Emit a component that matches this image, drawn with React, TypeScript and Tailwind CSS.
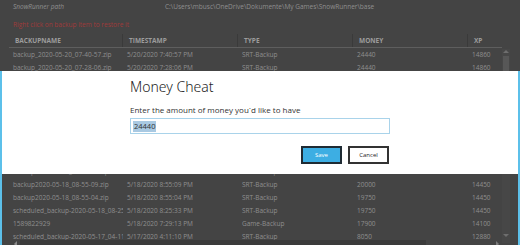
import React from "react";

const cols = [
  { w: "w-[114px]" },
  { w: "w-[115px]" },
  { w: "w-[115px]" },
  { w: "w-[115px]" },
  { w: "w-[34px]" },
];

const rows: string[][] = [
  ["backup_2020-05-20_07-40-57.zip", "5/20/2020 7:40:57 PM", "SRT-Backup", "24440", "14860"],
  ["backup_2020-05-20_07-28-06.zip", "5/20/2020 7:28:06 PM", "SRT-Backup", "24440", "14860"],
  ["backup_2020-05-20_06-55-12.zip", "5/20/2020 6:55:12 PM", "SRT-Backup", "23900", "14860"],
  ["backup_2020-05-19_09-12-41.zip", "5/19/2020 9:12:41 PM", "SRT-Backup", "22100", "14700"],
  ["backup_2020-05-19_08-40-03.zip", "5/19/2020 8:40:03 PM", "SRT-Backup", "21500", "14700"],
  ["backup_2020-05-19_07-58-22.zip", "5/19/2020 7:58:22 PM", "SRT-Backup", "21000", "14620"],
  ["backup_2020-05-19_07-20-10.zip", "5/19/2020 7:20:10 PM", "SRT-Backup", "20600", "14500"],
  ["backup_2020-05-18_09-30-18.zip", "5/18/2020 9:30:18 PM", "SRT-Backup", "20400", "14450"],
  ["backup_2020-05-18_09-10-52.zip", "5/18/2020 9:10:52 PM", "SRT-Backup", "20200", "14450"],
  ["backup2020-05-18_09-01-37.zip", "5/18/2020 9:01:37 PM", "SRT-Backup", "20000", "14450"],
  ["backup2020-05-18_08-55-09.zip", "5/18/2020 8:55:09 PM", "SRT-Backup", "20000", "14450"],
  ["backup2020-05-18_08-55-04.zip", "5/18/2020 8:55:04 PM", "SRT-Backup", "19750", "14450"],
  ["scheduled_backup-2020-05-18_08-25-33.zip", "5/18/2020 8:25:33 PM", "SRT-Backup", "19750", "14450"],
  ["1589822929", "5/18/2020 7:29:13 PM", "Game-Backup", "17900", "14100"],
  ["scheduled_backup-2020-05-17_04-11-10.zip", "5/17/2020 4:11:10 PM", "SRT-Backup", "8050", "12880"],
];

const headers = ["BACKUPNAME", "TIMESTAMP", "TYPE", "MONEY", "XP"];

export default function App() {
  return (
    <div
      className="relative w-[520px] h-[245px] overflow-hidden bg-[#444444] text-[#8f8f8f]"
      style={{ fontFamily: '"Open Sans", "Noto Sans", sans-serif' }}
    >
      {/* top info */}
      <div className="flex h-[13px] items-center pl-[13px] text-[6.5px] italic leading-[8px]">
        <span className="w-[152px]">SnowRunner path</span>
        <span className="not-italic">C:\Users\mbusc\OneDrive\Dokumente\My Games\SnowRunner\base</span>
      </div>
      <div className="flex h-[18px] items-center pl-[13px] pt-[5px] text-[6.5px] leading-[8px] text-[#a03a3a]">
        Right click on backup item to restore it
      </div>

      {/* table */}
      <div className="ml-[9px] mt-[3px] flex w-[502px]">
        <div className="flex w-[493px] flex-col">
          <div className="flex h-[14px] border-b-[1.5px] border-[#5e5e5e] text-[6.5px] font-bold leading-[8px] text-[#9c9c9c]">
            {headers.map((h, i) => (
              <div
                key={h}
                className={`${cols[i].w} flex items-center pl-[6px] pt-[1px] ${i < 4 ? "border-r border-[#3a3a3a]" : ""}`}
              >
                {h}
              </div>
            ))}
          </div>
          <div className="flex flex-col">
            {rows.map((r, ri) => (
              <div key={ri} className="flex h-[13px] items-center text-[6.5px] leading-[8px]">
                {r.map((c, ci) => (
                  <div
                    key={ci}
                    className={`${cols[ci].w} overflow-hidden whitespace-nowrap pl-[4px]`}
                  >
                    {c}
                  </div>
                ))}
              </div>
            ))}
          </div>
        </div>
        {/* vertical scrollbar */}
        <div className="mt-[15px] flex w-[8px] flex-col items-center bg-[#474747]">
          <div className="mt-[1px] h-0 w-0 border-x-[3px] border-b-[3px] border-x-transparent border-b-[#6e6e6e]" />
          <div className="mt-[3px] h-[60px] w-[6px] bg-[#575757]" />
        </div>
      </div>

      {/* horizontal scrollbar */}
      <div className="absolute left-[10px] top-[240px] flex h-[10px] w-[492px] items-start">
        <div className="ml-[4px] mt-[1px] h-0 w-0 border-y-[3px] border-r-[3px] border-y-transparent border-r-[#8a8a8a]" />
        <div className="ml-[3px] h-[8px] w-[406px] bg-[#3b3b3b]" />
        <div className="ml-[70px] mt-[1px] h-0 w-0 border-y-[3px] border-l-[3px] border-y-transparent border-l-[#7a7a7a]" />
      </div>
      <div className="absolute left-[503px] top-[234px] h-0 w-0 border-x-[3px] border-t-[3px] border-x-transparent border-t-[#6e6e6e]" />

      {/* window blue edges */}
      <div className="absolute left-0 top-[71px] h-[174px] w-[2px] bg-[#5cc0ea]" />
      <div className="absolute right-0 top-[71px] h-[174px] w-[2px] bg-[#5cc0ea]" />

      {/* dialog */}
      <div className="absolute left-[2px] top-[71px] h-[103px] w-[516px] bg-white">
        <div className="ml-[128px] w-[260px] pt-[6px]">
          <div
            className="text-[14px] leading-[19px] text-[#1e1e1e]"
            style={{ fontFamily: '"Noto Sans", sans-serif', fontWeight: 300 }}
          >
            Money Cheat
          </div>
          <div className="mt-[9px] text-[8px] leading-[10px] text-[#333]">
            Enter the amount of money you´d like to have
          </div>
          <div className="mt-[3px] flex h-[16px] items-center border border-[#a9d3ea] pl-[2px] text-[7.5px] leading-[11px] text-[#333]">
            <span className="bg-[#a9c9e2] px-[1px]">24440</span>
          </div>
          <div className="mt-[12px] flex justify-end gap-[6px] pr-[1px]">
            <div className="flex h-[18px] w-[41px] items-center justify-center border-2 border-[#1f2b33] bg-[#3daee3] text-[6px] leading-[8px] text-white">
              Save
            </div>
            <div className="flex h-[18px] w-[41px] items-center justify-center border-2 border-[#333] bg-white text-[6px] leading-[8px] text-[#222]">
              Cancel
            </div>
          </div>
        </div>
      </div>
    </div>
  );
}
